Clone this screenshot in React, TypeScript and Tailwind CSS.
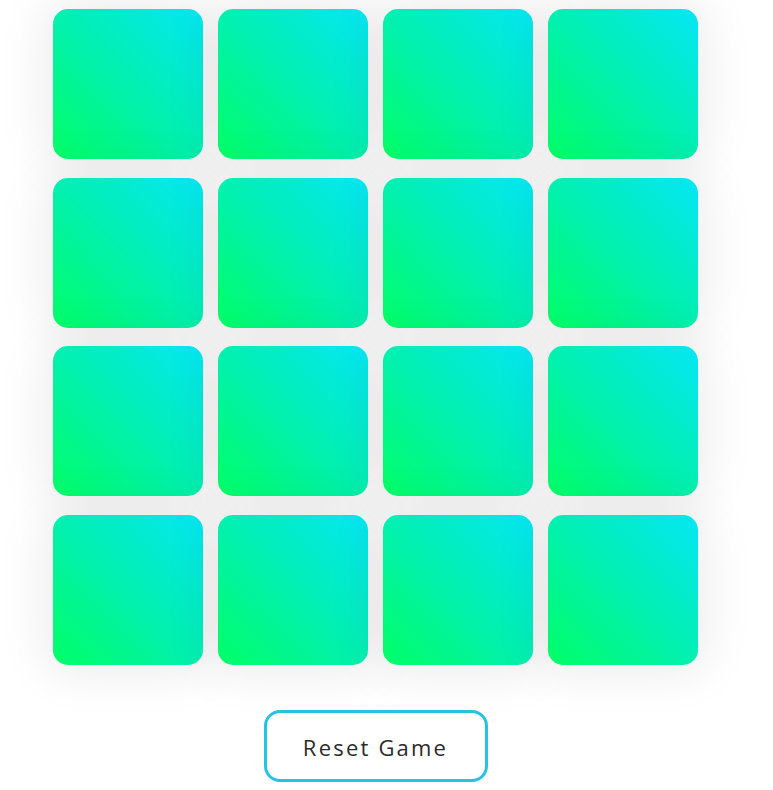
import React from "react";

export default function App() {
  const cards = Array.from({ length: 16 });
  return (
    <div className="min-h-[790px] w-[773px] bg-white pl-[53px] pt-[9px]" style={{ fontFamily: "Inter, 'Noto Sans', sans-serif" }}>
      <div className="grid w-[645px] grid-cols-[repeat(4,150px)] gap-x-[15px] gap-y-[18.67px]">
        {cards.map((_, i) => (
          <div
            key={i}
            className="h-[150px] w-[150px] rounded-[15px] bg-[linear-gradient(45deg,#00ff66_0%,#02f0b0_50%,#05e6f5_100%)] shadow-[0_0_50px_8px_rgba(0,0,0,0.08)]"
          />
        ))}
      </div>
      <div className="mt-[45px] flex w-[645px] justify-center">
        <button className="h-[72px] w-[224px] rounded-[16px] border-[3px] border-[#22c3e6] bg-white pt-[3px] font-['Open_Sans',sans-serif] text-[22px] font-medium tracking-[2.2px] text-[#2b2b2b]">
          Reset Game
        </button>
      </div>
    </div>
  );
}
